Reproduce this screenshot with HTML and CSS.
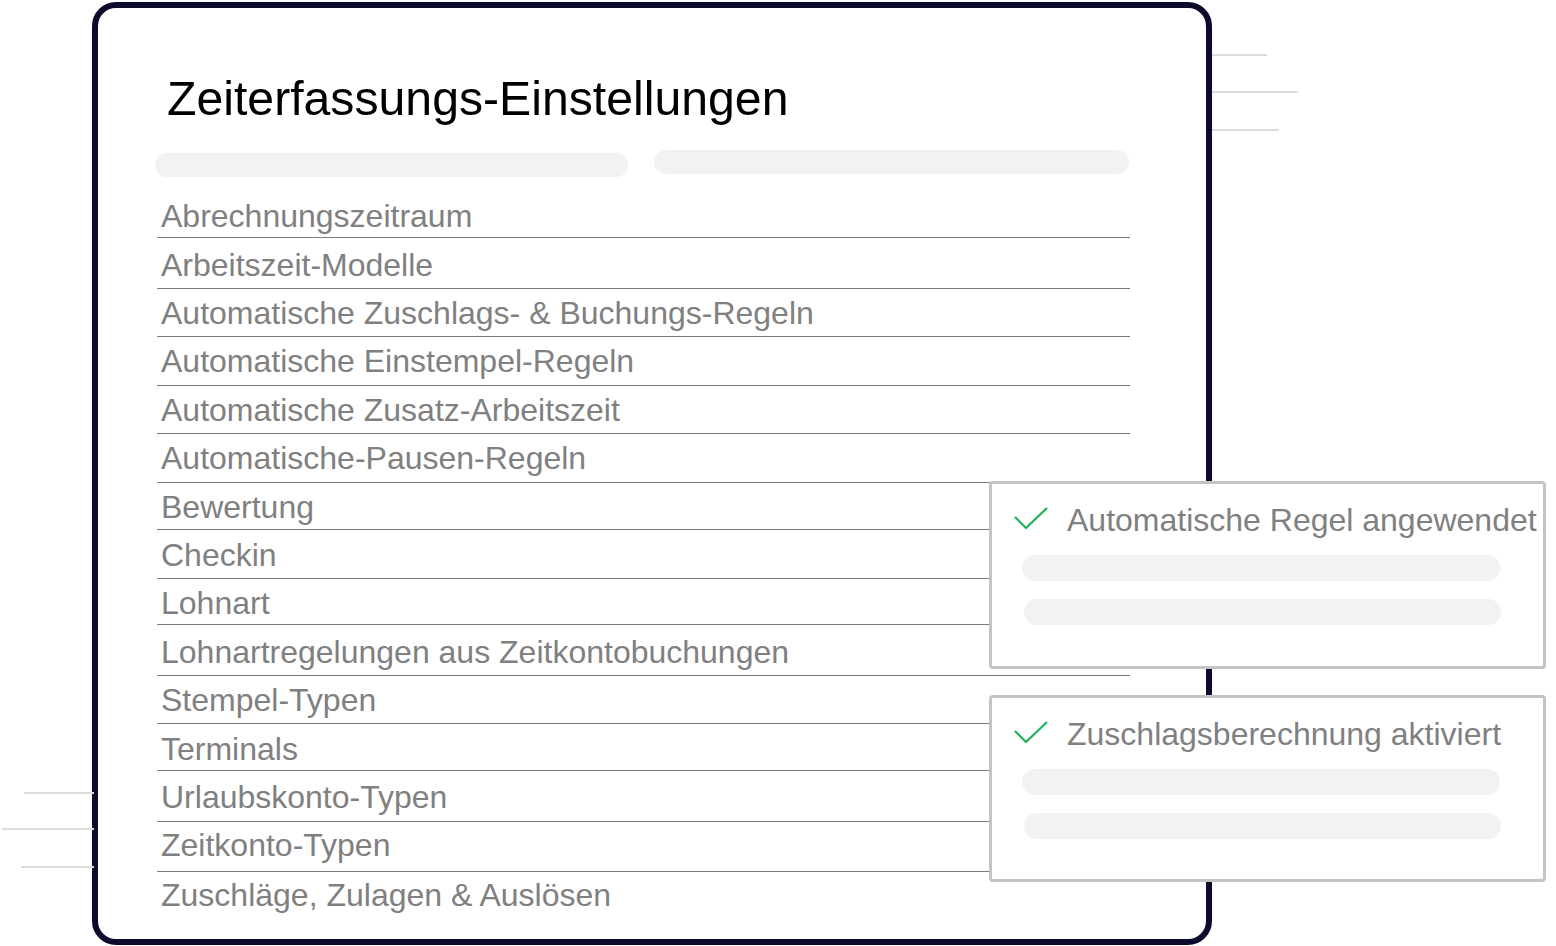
FILE: index.html
```html
<!DOCTYPE html>
<html lang="de">
<head>
<meta charset="utf-8">
<title>Zeiterfassungs-Einstellungen</title>
<link rel="stylesheet" href="styles.css">
</head>
<body>
<div class="stage">
  <span class="deco deco-r1"></span>
  <span class="deco deco-r2"></span>
  <span class="deco deco-r3"></span>
  <span class="deco deco-l1"></span>
  <span class="deco deco-l2"></span>
  <span class="deco deco-l3"></span>

  <section class="panel">
    <h1 class="title">Zeiterfassungs-Einstellungen</h1>
    <div class="skeleton-row">
      <span class="bar bar-a"></span>
      <span class="bar bar-b"></span>
    </div>
    <ul class="list">
      <li class="item">Abrechnungszeitraum</li>
      <li class="item">Arbeitszeit-Modelle</li>
      <li class="item">Automatische Zuschlags- &amp; Buchungs-Regeln</li>
      <li class="item">Automatische Einstempel-Regeln</li>
      <li class="item">Automatische Zusatz-Arbeitszeit</li>
      <li class="item">Automatische-Pausen-Regeln</li>
      <li class="item">Bewertung</li>
      <li class="item">Checkin</li>
      <li class="item">Lohnart</li>
      <li class="item">Lohnartregelungen aus Zeitkontobuchungen</li>
      <li class="item">Stempel-Typen</li>
      <li class="item">Terminals</li>
      <li class="item">Urlaubskonto-Typen</li>
      <li class="item">Zeitkonto-Typen</li>
      <li class="item last">Zuschläge, Zulagen &amp; Auslösen</li>
    </ul>
  </section>

  <div class="toast toast-1">
    <div class="toast-head">
      <svg class="check" width="34" height="24" viewBox="0 0 34 24"><path d="M1 10 L12 21 L33 1" fill="none" stroke="#1fb25a" stroke-width="2.2"/></svg>
      <span class="toast-text">Automatische Regel angewendet</span>
    </div>
    <span class="tbar tbar-1"></span>
    <span class="tbar tbar-2"></span>
  </div>

  <div class="toast toast-2">
    <div class="toast-head">
      <svg class="check" width="34" height="24" viewBox="0 0 34 24"><path d="M1 10 L12 21 L33 1" fill="none" stroke="#1fb25a" stroke-width="2.2"/></svg>
      <span class="toast-text">Zuschlagsberechnung aktiviert</span>
    </div>
    <span class="tbar tbar-1"></span>
    <span class="tbar tbar-2"></span>
  </div>
</div>
</body>
</html>
```

FILE: styles.css
```css
* { box-sizing: border-box; }

html, body {
  margin: 0;
  padding: 0;
  background: #ffffff;
}

body {
  font-family: "Liberation Sans", Arial, sans-serif;
}

.stage {
  position: relative;
  width: 1556px;
  height: 946px;
  overflow: hidden;
  padding-top: 2px;
  padding-left: 92px;
}

.panel {
  width: 1120px;
  height: 943px;
  border: 6px solid #0d0b2c;
  border-radius: 24px;
  padding: 62px 0 0 57px;
  background: #ffffff;
}

.title {
  margin: 0 0 0 12px;
  font-size: 48.2px;
  line-height: 56px;
  font-weight: 400;
  color: #000000;
}

.skeleton-row {
  display: flex;
  align-items: flex-start;
  gap: 26px;
  margin-top: 24px;
}

.bar {
  display: block;
  height: 24px;
  border-radius: 12px;
  background: #f2f2f2;
}

.bar-a { width: 473px; margin-top: 3px; }
.bar-b { width: 475px; }

.list {
  list-style: none;
  margin: 12px 0 0 2px;
  padding: 0;
  width: 973px;
}

.item {
  display: flex;
  align-items: flex-end;
  height: 48.77px;
  padding: 0 0 1px 4px;
  border-bottom: 1px solid #7a7a7a;
  font-size: 32px;
  line-height: 40px;
  color: #808080;
  white-space: nowrap;
}

.item:nth-child(2)  { height: 51px; padding-bottom: 3px; }
.item:nth-child(3)  { height: 48px; padding-bottom: 3px; }
.item:nth-child(4)  { height: 49px; padding-bottom: 4px; }
.item:nth-child(5)  { height: 48px; padding-bottom: 3px; }
.item:nth-child(6)  { height: 49px; padding-bottom: 4px; }
.item:nth-child(7)  { height: 47px; padding-bottom: 2px; }
.item:nth-child(8)  { height: 49px; padding-bottom: 3px; }
.item:nth-child(9)  { height: 46px; padding-bottom: 1px; }
.item:nth-child(10) { height: 51px; padding-bottom: 3px; }
.item:nth-child(11) { height: 48px; padding-bottom: 3px; }
.item:nth-child(12) { height: 47px; padding-bottom: 1px; }
.item:nth-child(13) { height: 51px; padding-bottom: 4px; }
.item:nth-child(14) { height: 50px; padding-bottom: 6px; }

.item.last {
  border-bottom: none;
  padding-bottom: 6px;
}

.deco {
  position: absolute;
  display: block;
  height: 2px;
  background: #dcdcdc;
}

.deco-r1 { left: 1212px; top: 54px; width: 55px; }
.deco-r2 { left: 1212px; top: 91px; width: 86px; }
.deco-r3 { left: 1212px; top: 129px; width: 67px; }
.deco-l1 { left: 24px; top: 792px; width: 70px; }
.deco-l2 { left: 2px; top: 828px; width: 92px; }
.deco-l3 { left: 21px; top: 866px; width: 73px; }

.toast {
  position: absolute;
  left: 989px;
  width: 557px;
  border: 3px solid #c4c4c4;
  border-radius: 4px;
  background: #ffffff;
  padding-top: 16px;
}

.toast-1 { top: 481px; height: 188px; }
.toast-2 { top: 695px; height: 187px; }

.toast-head {
  display: flex;
  align-items: center;
  padding-left: 22px;
  gap: 19px;
  height: 40px;
}

.check {
  display: block;
  flex: none;
  margin-top: -2px;
}

.toast-text {
  font-size: 32px;
  line-height: 40px;
  color: #808080;
  white-space: nowrap;
}

.tbar {
  display: block;
  height: 26px;
  border-radius: 13px;
  background: #f2f2f2;
  width: 478px;
}

.tbar-1 { margin: 15px 0 0 30px; }
.tbar-2 { margin: 18px 0 0 32px; width: 477px; }
```
